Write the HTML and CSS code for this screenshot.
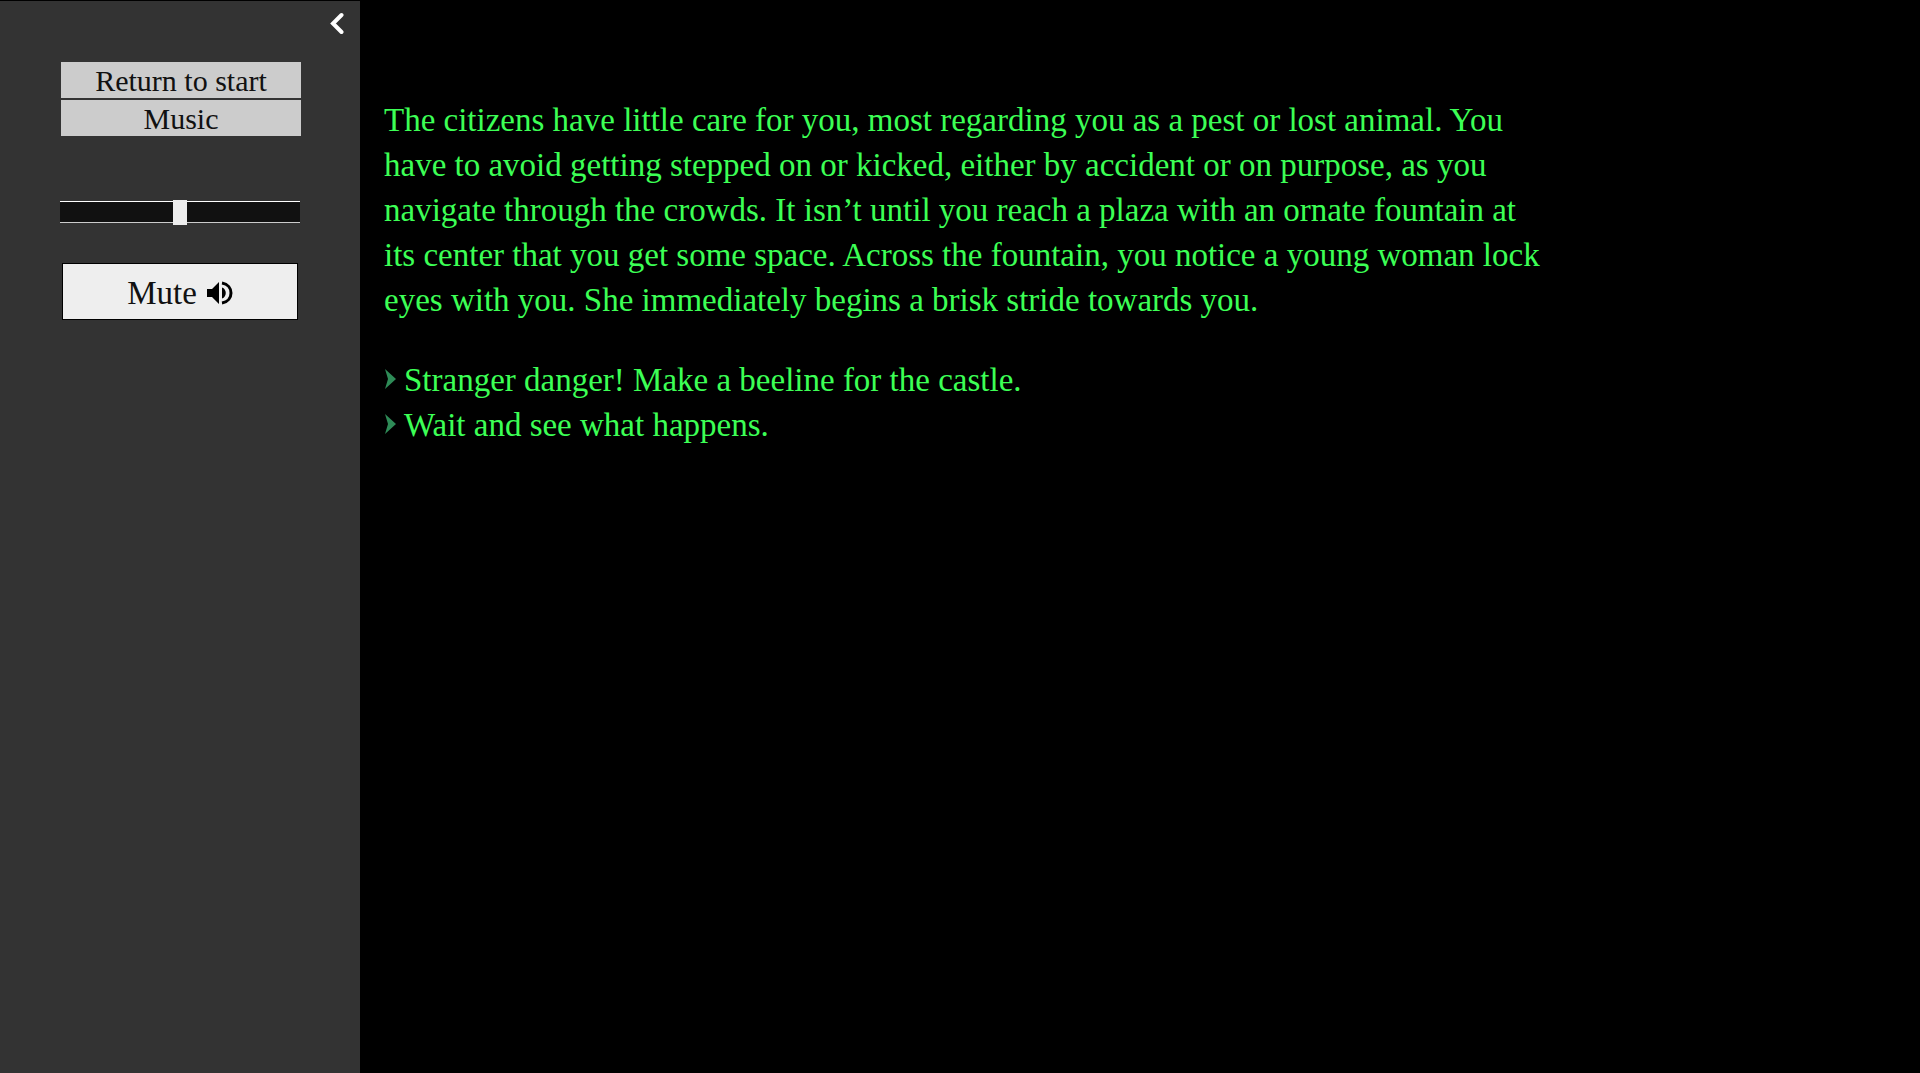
FILE: index.html
```
<!DOCTYPE html>
<html lang="en">
<head>
    <meta charset="UTF-8">
    <meta name="viewport" content="width=device-width, initial-scale=1.0">
    <title>The plaza</title>
    <link rel="stylesheet" href="styles.css">
</head>
<body>

    <!-- Sidebar -->
    <aside class="sidebar">
        <button class="collapse" type="button" aria-label="Collapse sidebar">
            <svg width="14" height="24" viewBox="0 0 14 24" aria-hidden="true">
                <path d="M11.5 3 L3 11.5 L11.5 20" fill="none" stroke="#fff" stroke-width="4" stroke-linecap="round"/>
            </svg>
        </button>

        <nav class="menu">
            <button type="button">Return to start</button>
            <button type="button">Music</button>
        </nav>

        <input class="volume" type="range" min="0" max="100" value="50" aria-label="Volume">

        <button class="mute" type="button">
            Mute
            <svg width="26" height="24" viewBox="0 0 26 24" aria-hidden="true">
                <path d="M0 8 H5 L12 1 V23 L5 16 H0 Z"/>
                <path d="M15 6.5 C20 8 20 16 15 17.5 Z"/>
                <path d="M15 2 C27 4 27 20 15 22" fill="none" stroke="#000" stroke-width="3"/>
            </svg>
        </button>
    </aside>

    <!-- Story passage -->
    <main class="passage">
        <p>
            The citizens have little care for you, most regarding you as a pest or lost animal. You<br>
            have to avoid getting stepped on or kicked, either by accident or on purpose, as you<br>
            navigate through the crowds. It isn’t until you reach a plaza with an ornate fountain at<br>
            its center that you get some space. Across the fountain, you notice a young woman lock<br>
            eyes with you. She immediately begins a brisk stride towards you.
        </p>

        <ul class="choices">
            <li>
                <svg width="12" height="20" viewBox="0 0 12 20" aria-hidden="true"><path d="M1 0 L12 10 L1 20 L4 10 Z"/></svg>
                <a href="#">Stranger danger! Make a beeline for the castle.</a>
            </li>
            <li>
                <svg width="12" height="20" viewBox="0 0 12 20" aria-hidden="true"><path d="M1 0 L12 10 L1 20 L4 10 Z"/></svg>
                <a href="#">Wait and see what happens.</a>
            </li>
        </ul>
    </main>

</body>
</html>
```

FILE: styles.css
```
* {
    box-sizing: border-box;
    margin: 0;
    padding: 0;
}

body {
    display: flex;
    min-height: 100vh;
    padding-top: 1px;
    background-color: #000;
    color: #3cff55;
    font-family: "Liberation Serif", serif;
    font-size: 33px;
    line-height: 45px;
}

button {
    border: none;
    color: #111;
    font-family: inherit;
    cursor: pointer;
}

/* Sidebar */
.sidebar {
    display: flex;
    flex-direction: column;
    flex: 0 0 360px;
    padding: 11px 60px 0;
    background-color: #333;
}

.collapse {
    display: flex;
    align-self: flex-end;
    margin-right: -44px;
    background: none;
}

.menu {
    display: flex;
    flex-direction: column;
    gap: 2px;
    margin: 26px -1px 0 1px;
}

.menu button {
    height: 36px;
    padding-top: 1px;
    background-color: #ccc;
    font-size: 30px;
    line-height: 35px;
}

.menu button:hover {
    background-color: #eee;
}

/* Volume slider */
.volume {
    appearance: none;
    width: 100%;
    height: 22px;
    margin-top: 65px;
    border-top: 1px solid #fff;
    border-bottom: 1px solid #ccc;
    background-color: #111;
}

.volume::-webkit-slider-thumb {
    appearance: none;
    width: 14px;
    height: 25px;
    background-color: #eee;
}

.mute {
    display: flex;
    align-items: center;
    justify-content: center;
    gap: 10px;
    height: 57px;
    margin: 40px 2px 0;
    padding-top: 3px;
    border: 1px solid #000;
    background-color: #eee;
    font-size: 33px;
}

/* Story passage */
.passage {
    flex: 1;
    padding: 97px 24px 0;
}

.choices {
    margin-top: 35px;
    list-style: none;
}

.choices li {
    display: flex;
    align-items: center;
    gap: 8px;
}

.choices svg {
    margin-bottom: 3px;
    fill: #2e8b57;
}

.choices a {
    color: inherit;
    text-decoration: none;
}

.choices a:hover {
    text-decoration: underline;
}
```
